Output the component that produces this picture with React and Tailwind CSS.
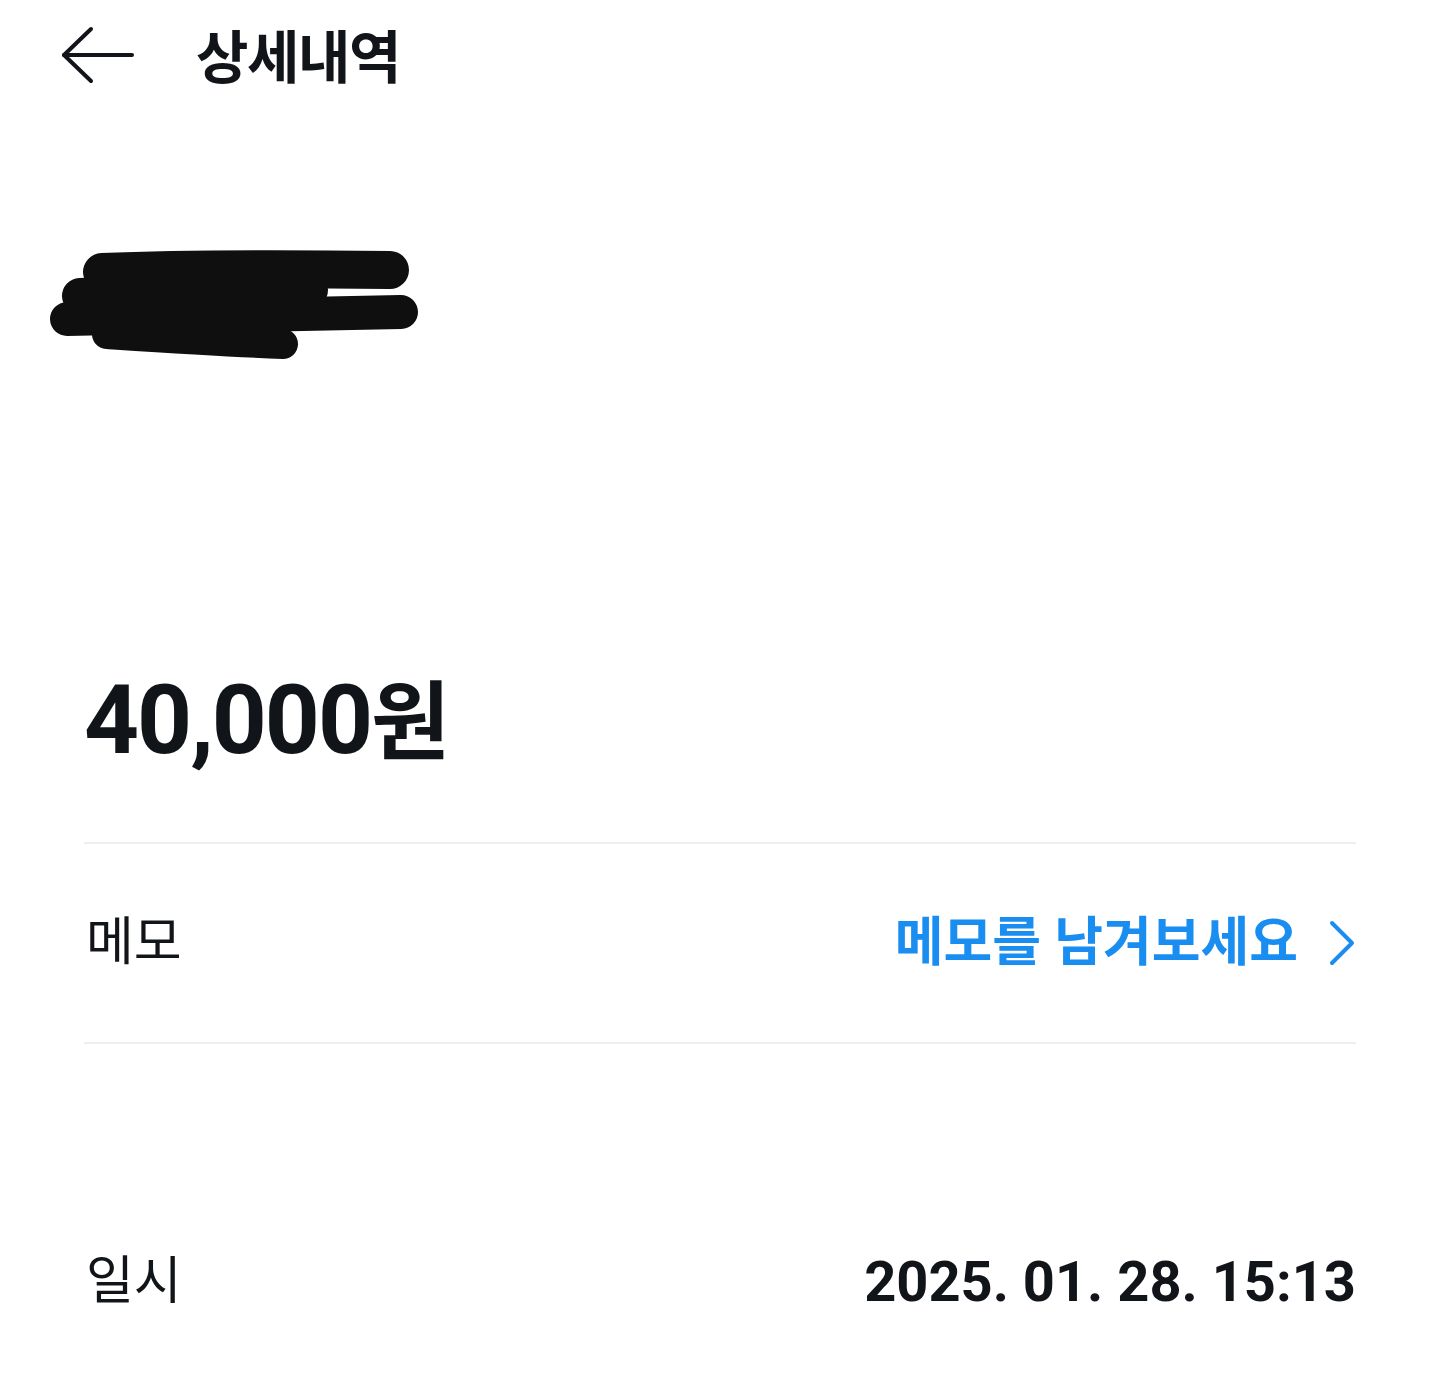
import React from 'react';

const font = { fontFamily: 'Roboto, "Noto Sans CJK KR", sans-serif' };

const BackArrow = () => (
  <svg width="76" height="60" viewBox="0 0 76 60" fill="none" stroke="#111418" strokeWidth="4" strokeLinecap="round" strokeLinejoin="round">
    <path d="M72 29H4" />
    <path d="M31 3L4 29l27 26" />
  </svg>
);

// hand-drawn redaction over the merchant name
const Redaction = () => (
  <svg width="380" height="116" viewBox="0 0 380 116" fill="none" stroke="#0f0f0f" strokeLinecap="round">
    <path d="M54 24C150 20 260 21 342 22" strokeWidth="38" />
    <path d="M32 48C120 44 200 42 262 42" strokeWidth="36" />
    <path d="M19 71C140 68 260 66 353 64" strokeWidth="34" />
    <path d="M59 86C120 90 180 94 235 96" strokeWidth="30" />
  </svg>
);

const Chevron = () => (
  <svg width="28" height="46" viewBox="0 0 28 46" fill="none" stroke="#1a8ef0" strokeWidth="4" strokeLinecap="round" strokeLinejoin="round">
    <path d="M4 3l20 20L4 43" />
  </svg>
);

export default function App() {
  return (
    <div className="w-[1440px] h-[1390px] bg-white overflow-hidden text-[#111418]" style={font}>
      {/* Header */}
      <div className="h-[112px] flex items-center pl-[60px]">
        <BackArrow />
        <h1 className="ml-[60px] mt-[4px] text-[57px] font-semibold leading-none tracking-tight">상세내역</h1>
      </div>

      {/* Merchant (redacted) */}
      <div className="mt-[136px] pl-[48px]">
        <Redaction />
      </div>

      <div className="px-[84px]">
        {/* Amount */}
        <div className="mt-[308px] h-[96px] overflow-visible text-[96px] font-bold leading-[96px] tracking-[-2px] whitespace-nowrap">
          40,000<span className="text-[86px] leading-none tracking-normal">원</span>
        </div>

        <div className="mt-[74px] h-[2px] bg-[#eeeeee]" />

        {/* Memo */}
        <div className="h-[198px] flex items-center justify-between">
          <span className="pl-[2px] text-[52px] leading-none">메모</span>
          <button className="flex items-center gap-[30px] text-[53px] font-semibold leading-none text-[#1a8ef0]">
            <span>메모를 남겨보세요</span>
            <Chevron />
          </button>
        </div>

        <div className="h-[2px] bg-[#eeeeee]" />

        {/* Date */}
        <div className="pt-[206px] h-[270px] flex items-start">
          <div className="w-full h-[64px] flex items-center justify-between">
            <span className="pl-[2px] text-[52px] leading-none">일시</span>
            <span className="text-[56px] font-bold leading-none">2025. 01. 28. 15:13</span>
          </div>
        </div>
      </div>
    </div>
  );
}
